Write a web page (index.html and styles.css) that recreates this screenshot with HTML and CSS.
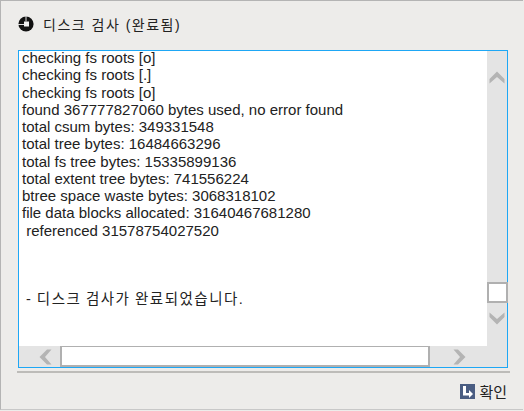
FILE: index.html
```html
<!DOCTYPE html>
<html lang="ko">
<head>
<meta charset="utf-8">
<title>디스크 검사</title>
<link rel="stylesheet" href="styles.css">
</head>
<body>
<div class="window">
  <header class="title">
    <svg class="title-icon" width="16" height="16" viewBox="0 0 16 16"><circle cx="8" cy="8" r="7.6" fill="#111"/><path fill="#eee" d="M6 5.5H11V10.5H6Z"/><path fill="#ddd" d="M7.5 0H8.5V5.5H7.5ZM0 8H6V9H0Z"/></svg>
    <span>디스크 검사 (완료됨)</span>
  </header>
  <section class="console">
    <div class="log-clip">
      <pre class="log">checking fs roots [o]
checking fs roots [.]
checking fs roots [o]
found 367777827060 bytes used, no error found
total csum bytes: 349331548
total tree bytes: 16484663296
total fs tree bytes: 15335899136
total extent tree bytes: 741556224
btree space waste bytes: 3068318102
file data blocks allocated: 31640467681280
 referenced 31578754027520</pre>
      <p class="ko">- 디스크 검사가 완료되었습니다.</p>
    </div>
    <div class="vbar">
      <svg class="arrow up" width="16" height="13" viewBox="0 0 16 13"><path fill="#b4b4b4" d="M8 0.5 15.5 8V12.5L8 6 0.5 12.5V8Z"/></svg>
      <div class="vthumb"></div>
      <svg class="arrow down" width="16" height="13" viewBox="0 0 16 13"><path fill="#b4b4b4" d="M8 12.5 15.5 5V0.5L8 7 0.5 0.5V5Z"/></svg>
    </div>
    <div class="hbar">
      <svg class="arrow left" width="13" height="16" viewBox="0 0 13 16"><path fill="#b4b4b4" d="M0.5 8 8 0.5H12.5L6 8 12.5 15.5H8Z"/></svg>
      <div class="hthumb"></div>
      <svg class="arrow right" width="13" height="16" viewBox="0 0 13 16"><path fill="#b4b4b4" d="M12.5 8 5 0.5H0.5L7 8 0.5 15.5H5Z"/></svg>
    </div>
    <div class="corner"></div>
  </section>
  <div class="rule"></div>
  <footer class="actions">
    <svg class="ok-icon" width="15" height="15" viewBox="0 0 15 15"><rect width="15" height="15" fill="#4a5d82"/><path fill="#fff" d="M3 2H6V9H9V6L13 10 9 14V11.5H3Z"/></svg>
    <span>확인</span>
  </footer>
</div>
</body>
</html>
```

FILE: styles.css
```css
html, body {
  margin: 0;
  padding: 0;
  background: #edecea;
}
.window {
  width: 523px;
  height: 410px;
  box-sizing: border-box;
  border-left: 1px solid #b4b4b4;
  border-top: 1px solid #b4b4b4;
  border-bottom: 1px solid #c8c8c8;
  display: flex;
  flex-direction: column;
  font-family: "Liberation Sans", "Noto Sans CJK KR", sans-serif;
  color: #222;
}
.title {
  height: 49px;
  display: flex;
  align-items: center;
  padding-left: 17px;
  gap: 9px;
  font-size: 14px;
  padding-bottom: 4px;
  box-sizing: border-box;
}
.title span { letter-spacing: 1.5px; }
.title-icon { display: block; }
.console {
  margin-left: 17px;
  width: 490px;
  height: 318px;
  box-sizing: border-box;
  border: 1px solid #1ea7f5;
  display: grid;
  grid-template-columns: 468px 20px;
  grid-template-rows: 295px 21px;
  background: #e4e4e4;
}
.log-clip {
  background: #fff;
}
.log {
  margin: 0;
  padding: 0 0 0 3px;
  font-family: "Liberation Sans", "Noto Sans CJK KR", sans-serif;
  font-size: 15px;
  line-height: 17.25px;
  color: #222;
  white-space: pre;
  transform: translateY(-2px);
}
.ko {
  margin: 50px 0 0;
  padding-left: 7px;
  font-size: 14.5px;
  line-height: 17px;
  letter-spacing: 1.5px;
  word-spacing: -1px;
  color: #222;
  white-space: pre;
}
.vbar {
  display: flex;
  flex-direction: column;
  align-items: center;
  padding-top: 20px;
  box-sizing: border-box;
}
.vthumb {
  width: 21px;
  height: 21px;
  margin-top: 198px;
  margin-right: -1px;
  box-sizing: border-box;
  border: 2px solid #b0b0b0;
  background: #fff;
  flex: none;
}
.arrow { display: block; flex: none; }
.vbar .down { margin-top: 9px; }
.hbar {
  display: flex;
  align-items: center;
  padding-left: 20px;
}
.hthumb {
  width: 370px;
  height: 21px;
  margin-left: 8px;
  box-sizing: border-box;
  border: 2px solid #b0b0b0;
  border-top-width: 1px;
  background: #fff;
  flex: none;
}
.hbar .right { margin-left: 23px; }
.corner { background: #e4e4e4; }
.rule {
  margin: 3px 13px 0 16px;
  height: 2px;
  background: #bdbcb9;
  flex: none;
}
.actions {
  flex: 1;
  display: flex;
  align-items: center;
  justify-content: flex-end;
  gap: 4px;
  padding-right: 16px;
  padding-top: 1px;
  font-size: 15px;
}
.ok-icon { display: block; }
```
